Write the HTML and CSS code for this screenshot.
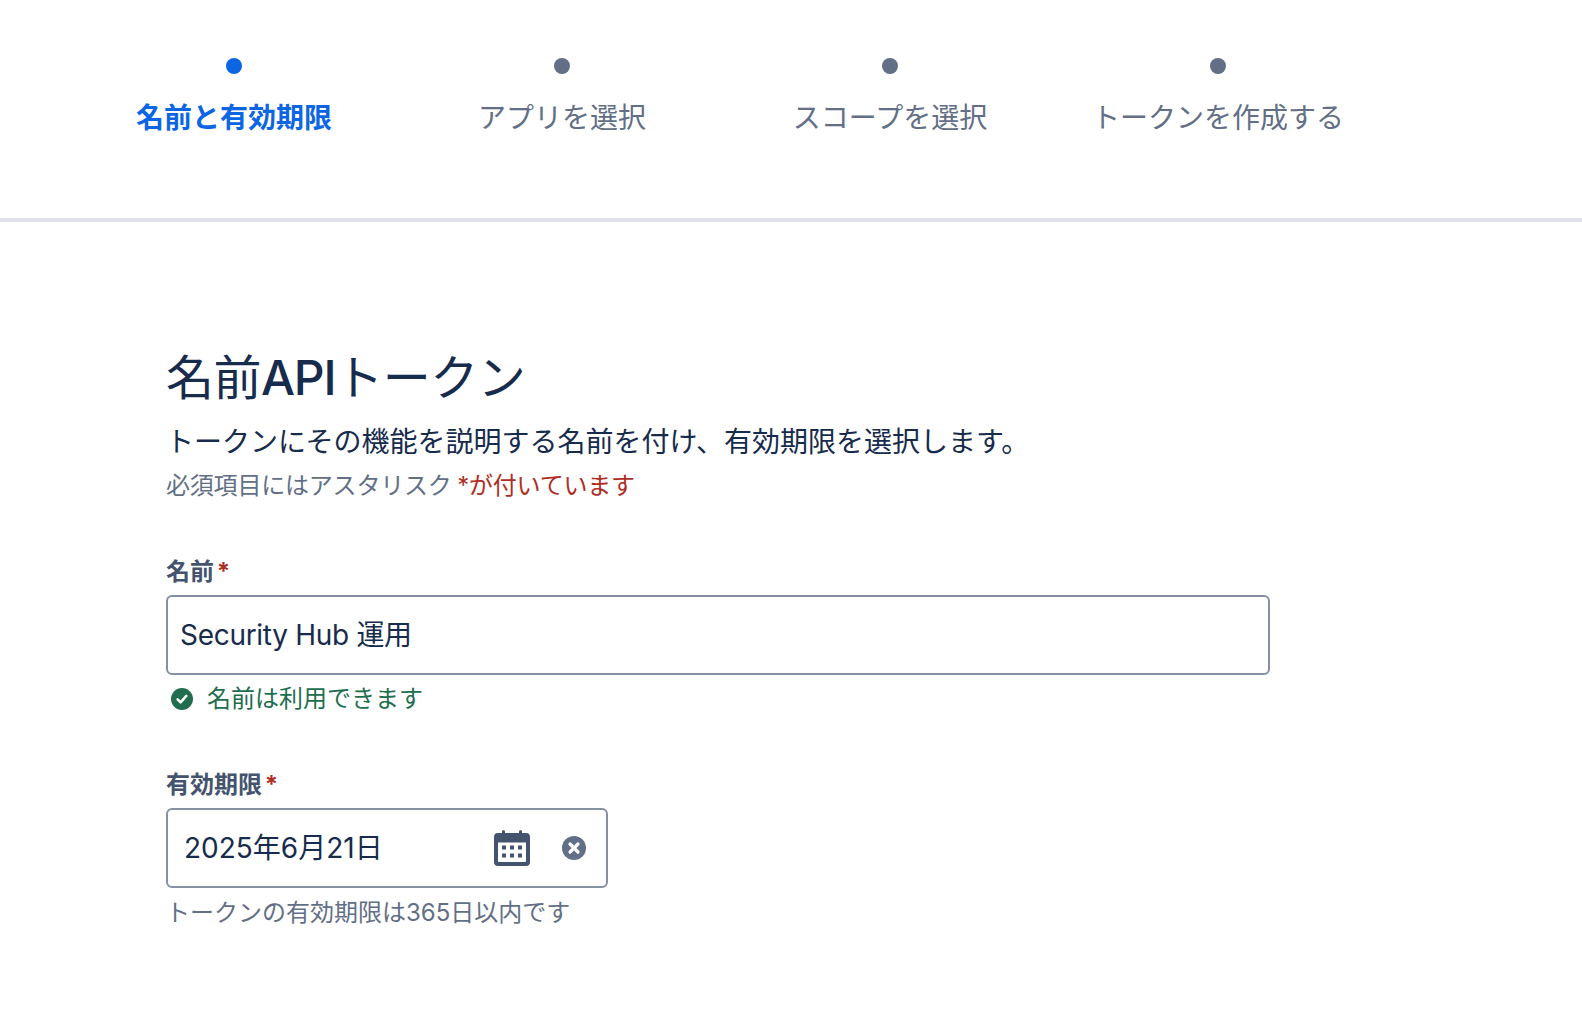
FILE: index.html
```html
<!DOCTYPE html>
<html lang="ja">

<head>
    <meta charset="UTF-8">
    <meta name="viewport" content="width=device-width, initial-scale=1.0">
    <title>APIトークンを作成</title>
    <link rel="stylesheet" href="styles.css">
</head>

<body>
    <nav class="stepper">
        <div class="step step-active">
            <span class="step-dot"></span>
            <span class="step-label">名前と有効期限</span>
        </div>
        <div class="step">
            <span class="step-dot"></span>
            <span class="step-label">アプリを選択</span>
        </div>
        <div class="step">
            <span class="step-dot"></span>
            <span class="step-label">スコープを選択</span>
        </div>
        <div class="step">
            <span class="step-dot"></span>
            <span class="step-label">トークンを作成する</span>
        </div>
    </nav>

    <main class="container">
        <h1 class="title">名前<span class="title-latin">API</span>トークン</h1>
        <p class="description">トークンにその機能を説明する名前を付け、有効期限を選択します。</p>
        <p class="required-note">必須項目にはアスタリスク <span class="required-text">*が付いています</span></p>

        <form class="token-form">
            <div class="field field-name">
                <label class="field-label" for="tokenName">名前 <span class="required-mark">*</span></label>
                <input class="text-input" id="tokenName" type="text" value="Security Hub 運用">
                <div class="valid-message">
                    <svg class="valid-icon" viewBox="0 0 24 24">
                        <circle cx="12" cy="12" r="12" fill="#216e4e" />
                        <path d="M7.2 12.4l3.3 3.3 6.200-7" fill="none" stroke="#fff" stroke-width="2.800" stroke-linecap="round" stroke-linejoin="round" />
                    </svg>
                    <span>名前は利用できます</span>
                </div>
            </div>

            <div class="field field-date">
                <label class="field-label" for="tokenExpiry">有効期限 <span class="required-mark">*</span></label>
                <div class="date-input">
                    <span class="date-value" id="tokenExpiry">2025年6月21日</span>
                    <svg class="calendar-icon" viewBox="0 0 36 36">
                        <path fill="#44546f" fill-rule="evenodd" d="M8 1.500a1.500 1.500 0 0 1 3 0V3h14V1.500a1.500 1.500 0 0 1 3 0V3h4a4 4 0 0 1 4 4v25a4 4 0 0 1-4 4H4a4 4 0 0 1-4-4V7a4 4 0 0 1 4-4h4V1.500zM4 12.500V31a1 1 0 0 0 1 1h26a1 1 0 0 0 1-1V12.500H4z" />
                        <path fill="#44546f" d="M8 15.500h4v4H8zM16 15.500h4v4h-4zM24 15.500h4v4h-4zM8 23.500h4v4H8zM16 23.500h4v4h-4zM24 23.500h4v4h-4z" />
                    </svg>
                    <svg class="clear-icon" viewBox="0 0 24 24">
                        <circle cx="12" cy="12" r="12" fill="#626f86" />
                        <path d="M8 8l8 8M16 8l-8 8" fill="none" stroke="#fff" stroke-width="3.200" stroke-linecap="round" />
                    </svg>
                </div>
                <p class="help-text">トークンの有効期限は365日以内です</p>
            </div>
        </form>
    </main>
</body>

</html>
```

FILE: styles.css
```css
:root {
    --primary-color: #0c66e4;
    --heading-color: #172b4d;
    --subtle-color: #626f86;
    --label-color: #44546f;
    --border-color: #8590a2;
    --danger-color: #ae2e24;
    --success-color: #216e4e;
}

* {
    margin: 0;
    padding: 0;
    box-sizing: border-box;
}

body {
    font-family: Inter, 'Noto Sans CJK JP', sans-serif;
    background-color: #ffffff;
    color: var(--heading-color);
}

.stepper {
    display: flex;
    height: 222px;
    padding: 58px 0 0 70px;
    border-bottom: 4px solid #dfe1e6;
}

.step {
    display: flex;
    flex-direction: column;
    align-items: center;
    width: 328px;
    color: var(--subtle-color);
}

.step-dot {
    width: 16px;
    height: 16px;
    border-radius: 50%;
    background-color: var(--subtle-color);
}

.step-label {
    margin-top: 24px;
    font-size: 28px;
    line-height: 40px;
}

.step-active {
    color: var(--primary-color);
}

.step-active .step-dot {
    background-color: var(--primary-color);
}

.step-active .step-label {
    font-weight: 700;
}

.container {
    padding: 126px 0 0 166px;
    width: 1270px;
}

.title {
    font-size: 48px;
    font-weight: 400;
    line-height: 60px;
    letter-spacing: -0.5px;
}

.title-latin {
    font-weight: 500;
    letter-spacing: -1.2px;
}

.description {
    margin-top: 14px;
    font-size: 28px;
    line-height: 40px;
}

.required-note {
    margin-top: 8px;
    font-size: 24px;
    line-height: 32px;
    letter-spacing: -0.2px;
    word-spacing: -1px;
    color: var(--subtle-color);
}

.required-text {
    color: var(--danger-color);
}

.field-name {
    margin-top: 54px;
}

.field-date {
    margin-top: 54px;
}

.field-label {
    display: block;
    margin-bottom: 7px;
    font-size: 24px;
    font-weight: 700;
    line-height: 32px;
    word-spacing: -3px;
    color: var(--label-color);
}

.required-mark {
    color: var(--danger-color);
}

.text-input {
    display: block;
    width: 100%;
    height: 80px;
    padding: 0 12px 5px;
    border: 2px solid var(--border-color);
    border-radius: 6px;
    font-family: inherit;
    font-size: 28px;
    letter-spacing: -0.3px;
    color: var(--heading-color);
    outline: none;
}

.valid-message {
    display: flex;
    align-items: center;
    gap: 14px;
    margin-top: 8px;
    padding-left: 5px;
    font-size: 24px;
    line-height: 32px;
    color: var(--success-color);
}

.valid-icon {
    width: 22px;
    height: 22px;
}

.date-input {
    display: flex;
    align-items: center;
    width: 442px;
    height: 80px;
    padding: 0 20px 0 16px;
    border: 2px solid var(--border-color);
    border-radius: 6px;
}

.date-value {
    flex: 1;
    padding-bottom: 4px;
    font-size: 28px;
}

.calendar-icon {
    width: 36px;
    height: 36px;
}

.clear-icon {
    width: 24px;
    height: 24px;
    margin-left: 32px;
}

.help-text {
    margin-top: 9px;
    font-size: 24px;
    line-height: 32px;
    color: var(--subtle-color);
}
```
